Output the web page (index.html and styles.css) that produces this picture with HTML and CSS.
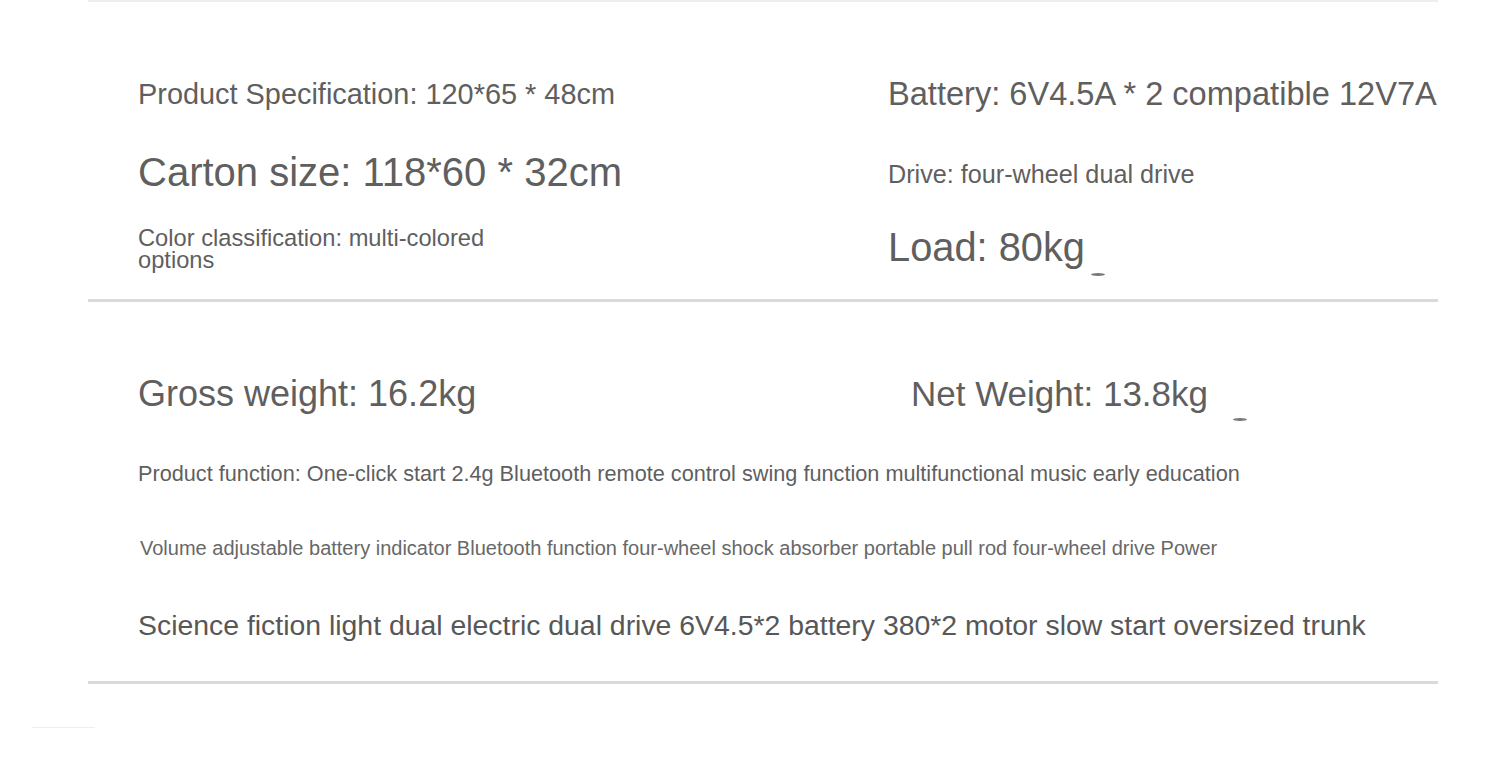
FILE: index.html
```html
<!DOCTYPE html>
<html lang="en">
<head>
    <meta charset="UTF-8">
    <meta name="viewport" content="width=device-width, initial-scale=1.0">
    <title>Product Specification</title>
    <link rel="stylesheet" href="styles.css">
</head>
<body>
    <div class="sheet">
        <div class="block block-top">
            <div class="col col-left">
                <p class="spec">Product Specification: 120*65 * 48cm</p>
                <p class="carton">Carton size: 118*60 * 32cm</p>
                <p class="color">Color classification: multi-colored options</p>
            </div>
            <div class="col col-right">
                <p class="battery">Battery: 6V4.5A * 2 compatible 12V7A</p>
                <p class="drive">Drive: four-wheel dual drive</p>
                <p class="load">Load: 80kg<span class="mark mark-load"></span></p>
            </div>
        </div>
        <div class="block block-bottom">
            <div class="weights">
                <p class="gross">Gross weight: 16.2kg</p>
                <p class="net">Net Weight: 13.8kg<span class="mark mark-net"></span></p>
            </div>
            <p class="func">Product function: One-click start 2.4g Bluetooth remote control swing function multifunctional music early education</p>
            <p class="volume">Volume adjustable battery indicator Bluetooth function four-wheel shock absorber portable pull rod four-wheel drive Power</p>
            <p class="science">Science fiction light dual electric dual drive 6V4.5*2 battery 380*2 motor slow start oversized trunk</p>
        </div>
    </div>
    <div class="scrap"></div>
</body>
</html>
```
FILE: styles.css
```css
body {
    margin: 0;
    background: #fff;
    font-family: "Liberation Sans", Arial, sans-serif;
    color: #5f5f5f;
}
p {
    margin: 0;
    line-height: 1;
    white-space: nowrap;
}
.sheet {
    margin-left: 88px;
    width: 1350px;
    border-top: 2px solid #eeeeee;
}
.block {
    box-sizing: border-box;
    border-bottom: 3px solid #dadada;
}
.block-top {
    height: 300px;
    display: flex;
}
.block-bottom {
    height: 382px;
    padding-left: 50px;
}
.col {
    display: flex;
    flex-direction: column;
    align-items: flex-start;
}
.col-left {
    width: 750px;
    padding-left: 50px;
}

/* left column */
.spec {
    margin-top: 78px;
    font-size: 28.9px;
}
.carton {
    margin-top: 43px;
    font-size: 40px;
}
.color {
    margin-top: 35px;
    width: 360px;
    font-size: 23.7px;
    line-height: 22px;
    white-space: normal;
}

/* right column */
.battery {
    margin-top: 76px;
    font-size: 32.6px;
}
.drive {
    margin-top: 51px;
    font-size: 25.2px;
}
.load {
    margin-top: 41px;
    font-size: 39.8px;
    position: relative;
}

/* bottom block */
.weights {
    display: flex;
    padding-top: 74px;
}
.gross {
    width: 773px;
    font-size: 36px;
}
.net {
    font-size: 35px;
    position: relative;
}
.func {
    margin-top: 51px;
    font-size: 21.7px;
}
.volume {
    margin-top: 53px;
    margin-left: 2px;
    font-size: 20px;
    color: #686868;
}
.science {
    margin-top: 53px;
    font-size: 28.4px;
    color: #575757;
}

.mark {
    position: absolute;
    width: 14px;
    height: 3px;
    border-radius: 50%;
    background: #777;
}
.mark-load {
    left: 203px;
    top: 45px;
}
.mark-net {
    left: 322px;
    top: 42px;
}
.scrap {
    margin: 43px 0 0 32px;
    width: 63px;
    border-top: 1px solid #eeeeee;
}
```
